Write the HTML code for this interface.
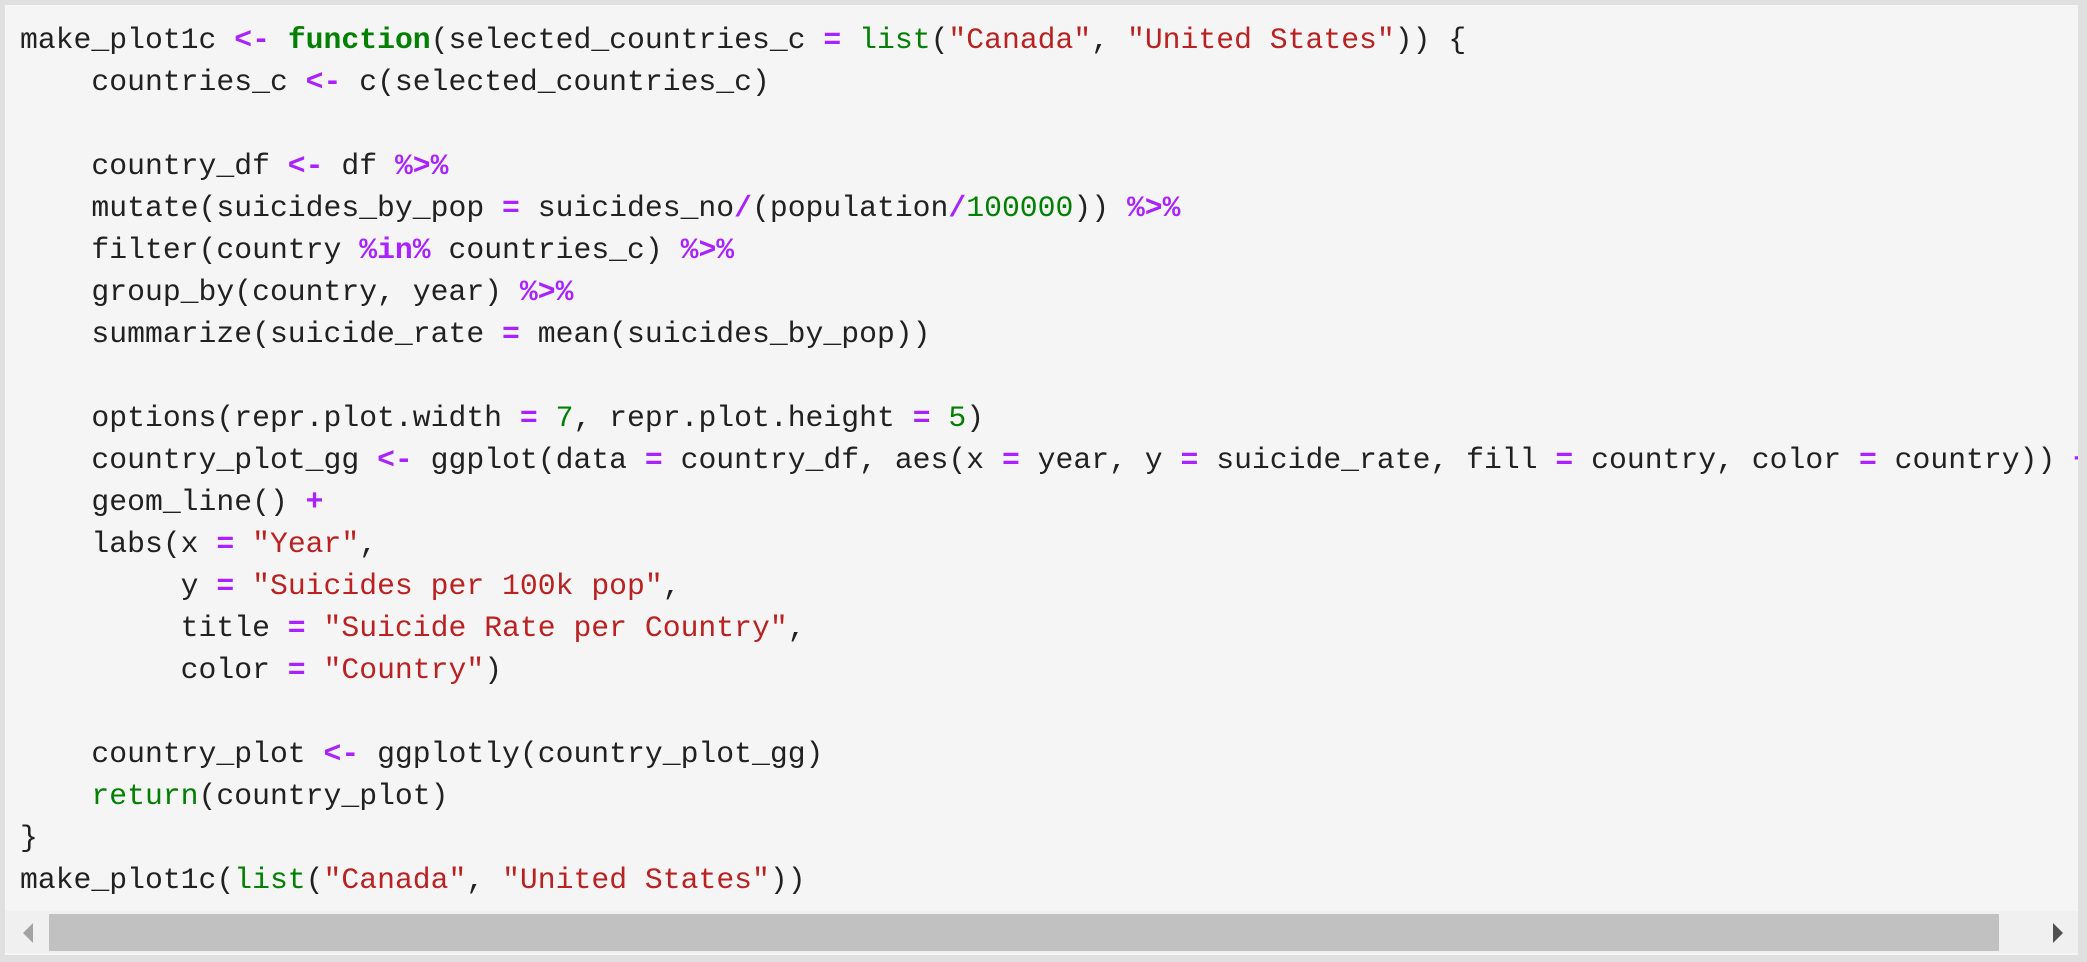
<!DOCTYPE html>
<html><head><style>
html,body{margin:0;padding:0;background:#fff;width:2087px;height:962px;overflow:hidden}
.box{position:absolute;left:0;top:0;width:2087px;height:962px;background:#e0e0e0}
.inner{position:absolute;left:5px;top:5px;width:2073px;height:950px;background:#f5f5f5;overflow:hidden}
pre{margin:0;position:absolute;left:15px;top:14px;font-family:"Liberation Mono",monospace;font-size:29.75px;line-height:42px;color:#212121;white-space:pre}
.o{color:#aa22ff;font-weight:bold}.k{color:#008000;font-weight:bold}.s{color:#ba2121}.n{color:#008000}.b{color:#008000}
.track{position:absolute;left:5px;top:911px;width:2073px;height:42px;background:#f0f0f0}
.thumb{position:absolute;left:49px;top:914px;width:1950px;height:37px;background:#c1c1c1}
</style></head><body>
<div class="box"></div>
<div class="inner">
<pre>make_plot1c <span class="o">&lt;-</span> <span class="k">function</span>(selected_countries_c <span class="o">=</span> <span class="b">list</span>(<span class="s">"Canada"</span>, <span class="s">"United States"</span>)) {
    countries_c <span class="o">&lt;-</span> c(selected_countries_c)

    country_df <span class="o">&lt;-</span> df <span class="o">%&gt;%</span>
    mutate(suicides_by_pop <span class="o">=</span> suicides_no<span class="o">/</span>(population<span class="o">/</span><span class="n">100000</span>)) <span class="o">%&gt;%</span>
    filter(country <span class="o">%in%</span> countries_c) <span class="o">%&gt;%</span>
    group_by(country, year) <span class="o">%&gt;%</span>
    summarize(suicide_rate <span class="o">=</span> mean(suicides_by_pop))

    options(repr.plot.width <span class="o">=</span> <span class="n">7</span>, repr.plot.height <span class="o">=</span> <span class="n">5</span>)
    country_plot_gg <span class="o">&lt;-</span> ggplot(data <span class="o">=</span> country_df, aes(x <span class="o">=</span> year, y <span class="o">=</span> suicide_rate, fill <span class="o">=</span> country, color <span class="o">=</span> country)) <span class="o">+</span>
    geom_line() <span class="o">+</span>
    labs(x <span class="o">=</span> <span class="s">"Year"</span>,
         y <span class="o">=</span> <span class="s">"Suicides per 100k pop"</span>,
         title <span class="o">=</span> <span class="s">"Suicide Rate per Country"</span>,
         color <span class="o">=</span> <span class="s">"Country"</span>)

    country_plot <span class="o">&lt;-</span> ggplotly(country_plot_gg)
    <span class="b">return</span>(country_plot)
}
make_plot1c(<span class="b">list</span>(<span class="s">"Canada"</span>, <span class="s">"United States"</span>))</pre>
</div>
<div class="track"></div>
<div class="thumb"></div>
<svg style="position:absolute;left:22px;top:922px" width="12" height="22"><polygon points="11,1 11,21 1,11" fill="#a3a3a3"/></svg>
<svg style="position:absolute;left:2052px;top:922px" width="12" height="22"><polygon points="1,1 1,21 11,11" fill="#505050"/></svg>
</body></html>
